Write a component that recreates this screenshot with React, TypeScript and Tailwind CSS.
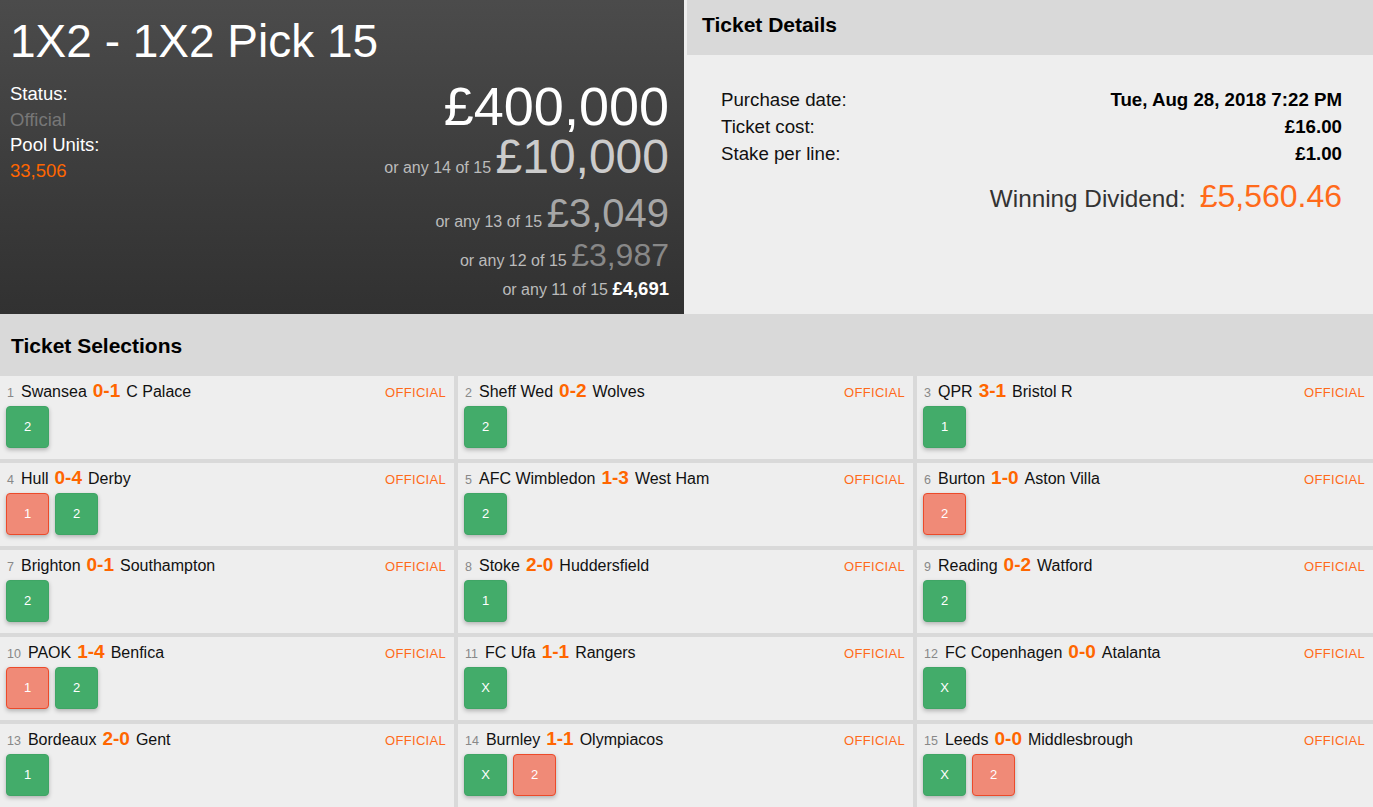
import React from "react";

type Pick = { v: string; ok: boolean };
type Match = { n: number; home: string; score: string; away: string; picks: Pick[] };

const matches: Match[] = [
  { n: 1, home: "Swansea", score: "0-1", away: "C Palace", picks: [{ v: "2", ok: true }] },
  { n: 2, home: "Sheff Wed", score: "0-2", away: "Wolves", picks: [{ v: "2", ok: true }] },
  { n: 3, home: "QPR", score: "3-1", away: "Bristol R", picks: [{ v: "1", ok: true }] },
  { n: 4, home: "Hull", score: "0-4", away: "Derby", picks: [{ v: "1", ok: false }, { v: "2", ok: true }] },
  { n: 5, home: "AFC Wimbledon", score: "1-3", away: "West Ham", picks: [{ v: "2", ok: true }] },
  { n: 6, home: "Burton", score: "1-0", away: "Aston Villa", picks: [{ v: "2", ok: false }] },
  { n: 7, home: "Brighton", score: "0-1", away: "Southampton", picks: [{ v: "2", ok: true }] },
  { n: 8, home: "Stoke", score: "2-0", away: "Huddersfield", picks: [{ v: "1", ok: true }] },
  { n: 9, home: "Reading", score: "0-2", away: "Watford", picks: [{ v: "2", ok: true }] },
  { n: 10, home: "PAOK", score: "1-4", away: "Benfica", picks: [{ v: "1", ok: false }, { v: "2", ok: true }] },
  { n: 11, home: "FC Ufa", score: "1-1", away: "Rangers", picks: [{ v: "X", ok: true }] },
  { n: 12, home: "FC Copenhagen", score: "0-0", away: "Atalanta", picks: [{ v: "X", ok: true }] },
  { n: 13, home: "Bordeaux", score: "2-0", away: "Gent", picks: [{ v: "1", ok: true }] },
  { n: 14, home: "Burnley", score: "1-1", away: "Olympiacos", picks: [{ v: "X", ok: true }, { v: "2", ok: false }] },
  { n: 15, home: "Leeds", score: "0-0", away: "Middlesbrough", picks: [{ v: "X", ok: true }, { v: "2", ok: false }] },
];

function Cell({ m }: { m: Match }) {
  return (
    <div className="bg-[#eeeeee] h-[83px] pl-[6px] pr-[8px] pt-[4px]">
      <div className="flex items-baseline h-[20px] leading-[20px] translate-y-[1px]">
        <span className="text-[12.5px] text-[#888888] mr-[7px] ml-[1px]">{m.n}</span>
        <span className="text-[16px] text-[#111111]">{m.home}</span>
        <span className="text-[19px] font-bold text-[#ff6600] mx-[6px]">{m.score}</span>
        <span className="text-[16px] text-[#111111]">{m.away}</span>
        <span className="ml-auto text-[13px] text-[#ff6a1a] tracking-[0.3px]">OFFICIAL</span>
      </div>
      <div className="flex gap-[6px] mt-[6px]">
        {m.picks.map((p, i) => (
          <div
            key={i}
            className={
              p.ok
                ? "w-[43px] h-[42px] rounded-[4px] bg-[#43ac6a] border border-[#3fa565] text-white text-[13px] flex items-center justify-center shadow-[0_2px_4px_rgba(0,0,0,0.25)]"
                : "w-[43px] h-[42px] rounded-[4px] bg-[#f08a77] border border-[#ec4a2a] text-white text-[13px] flex items-center justify-center shadow-[0_2px_4px_rgba(0,0,0,0.25)]"
            }
          >
            {p.v}
          </div>
        ))}
      </div>
    </div>
  );
}

export default function App() {
  return (
    <div className="w-[1373px] h-[807px] overflow-hidden bg-[#eeeeee] font-['Liberation_Sans',Arial,sans-serif]">
      <div className="flex h-[314px]">
        {/* Left dark panel */}
        <div className="w-[684px] h-[314px] bg-gradient-to-b from-[#4b4b4b] to-[#313131] pl-[9px] pr-[15px] pt-[18px] flex flex-col">
          <div className="text-[46px] leading-[46px] text-white ml-[1px]">1X2 - 1X2 Pick 15</div>
          <div className="flex justify-between mt-[15px]">
            <div className="text-[18.5px] leading-[25.7px] mt-[2px] ml-[1px]">
              <div className="text-white">Status:</div>
              <div className="text-[#777777]">Official</div>
              <div className="text-white">Pool Units:</div>
              <div className="text-[#ff6600]">33,506</div>
            </div>
            <div className="flex flex-col items-end mt-[1px]">
              <div className="text-[54px] leading-[52px] mb-[1px] text-white">£400,000</div>
              <div className="flex items-baseline leading-none">
                <span className="text-[16px] text-[#bbbbbb]">or any 14 of 15&nbsp;</span>
                <span className="text-[48px] text-[#cccccc]">£10,000</span>
              </div>
              <div className="flex items-baseline leading-none mt-[12px]">
                <span className="text-[16px] text-[#bbbbbb]">or any 13 of 15&nbsp;</span>
                <span className="text-[40px] text-[#a6a6a6]">£3,049</span>
              </div>
              <div className="flex items-baseline leading-none mt-[6px]">
                <span className="text-[16px] text-[#bbbbbb]">or any 12 of 15&nbsp;</span>
                <span className="text-[32px] text-[#888888]">£3,987</span>
              </div>
              <div className="flex items-baseline leading-none mt-[9px]">
                <span className="text-[16px] text-[#bbbbbb]">or any 11 of 15&nbsp;</span>
                <span className="text-[18.5px] font-bold text-white">£4,691</span>
              </div>
            </div>
          </div>
        </div>
        {/* Right details panel */}
        <div className="ml-[3px] flex-1 flex flex-col">
          <div className="h-[55px] bg-[#d9d9d9] pl-[15px] pt-[14px]">
            <div className="text-[21px] leading-none font-bold text-black">Ticket Details</div>
          </div>
          <div className="flex-1 pl-[34px] pr-[31px] pt-[31px] text-[18.7px] leading-[27px] text-[#111111]">
            <div className="flex justify-between">
              <span>Purchase date:</span>
              <span className="font-bold text-black">Tue, Aug 28, 2018 7:22 PM</span>
            </div>
            <div className="flex justify-between">
              <span>Ticket cost:</span>
              <span className="font-bold text-black">£16.00</span>
            </div>
            <div className="flex justify-between">
              <span>Stake per line:</span>
              <span className="font-bold text-black">£1.00</span>
            </div>
            <div className="flex justify-end items-baseline leading-none mt-[13px]">
              <span className="text-[24.3px] text-[#333333]">Winning Dividend:</span>
              <span className="text-[32px] text-[#ff6a1a] ml-[14px]">£5,560.46</span>
            </div>
          </div>
        </div>
      </div>
      <div className="h-[62px] bg-[#d9d9d9] pl-[11px] pt-[21px]">
        <div className="text-[21px] leading-none font-bold text-black">Ticket Selections</div>
      </div>
      <div className="grid grid-cols-[454px_455px_1fr] gap-[4px] bg-[#d9d9d9]">
        {matches.map((m) => (
          <Cell key={m.n} m={m} />
        ))}
      </div>
    </div>
  );
}
